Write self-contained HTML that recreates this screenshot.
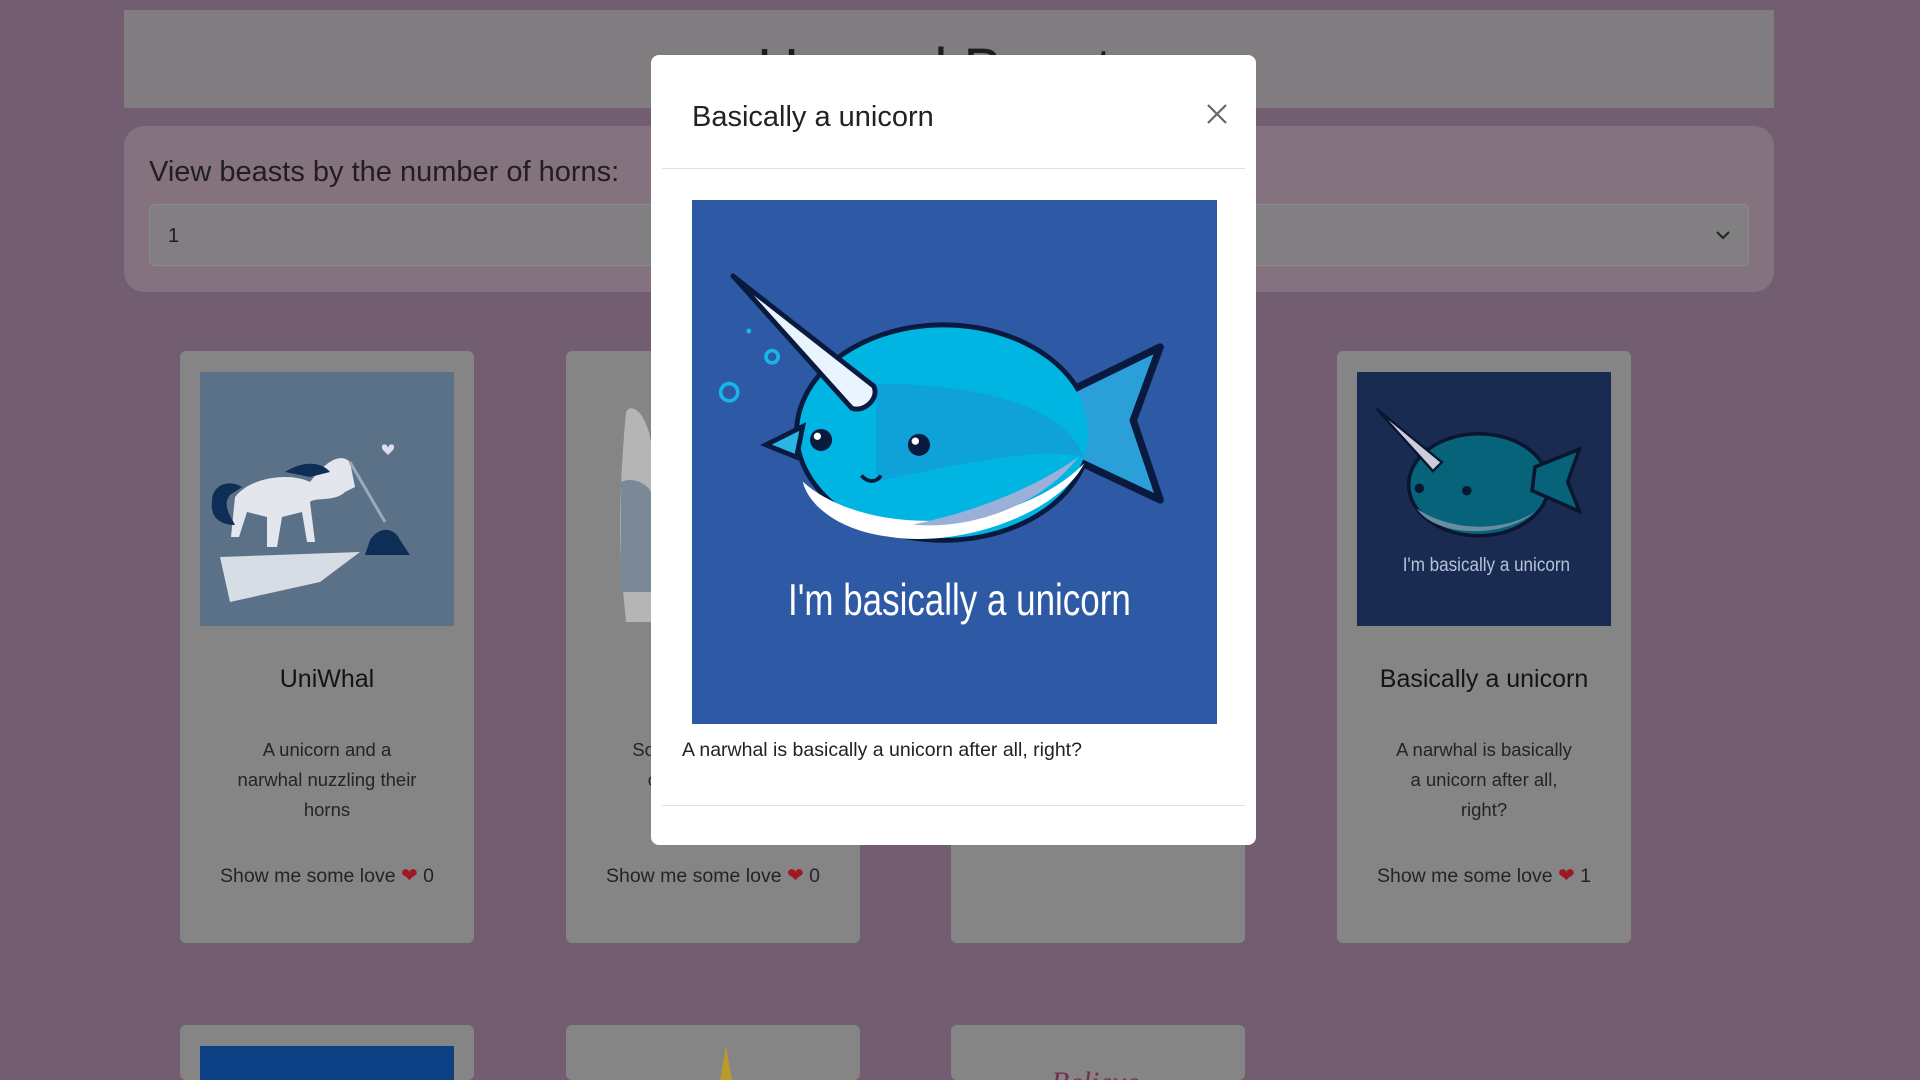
<!DOCTYPE html>
<html style="width:1920px;height:1080px;overflow:hidden"><head><meta charset="utf-8"><style>
*{box-sizing:border-box;margin:0;padding:0}
body{width:1920px;height:1080px;overflow:hidden;background:#735d71;font-family:"Liberation Sans",sans-serif;color:#1f1d1f;position:relative}
.hdr{position:absolute;left:124px;top:10px;width:1650px;height:98px;background:#807c80;overflow:hidden}
.hdr h1{position:absolute;left:0;right:0;top:26px;text-align:center;font-size:58px;font-weight:500;color:#1e1c1f}
.flt{position:absolute;left:124px;top:126px;width:1650px;height:166px;background:#85727f;border-radius:20px}
.flt label{position:absolute;left:25px;top:30px;font-size:29px;color:#221d21}
.sel{position:absolute;left:25px;top:78px;width:1600px;height:62px;background:#827f83;border:1px solid #8d8a8e;border-radius:6px;font-size:20px;padding:20px 0 0 18px}
.sel svg{position:absolute;right:16px;top:24px}
.card{position:absolute;width:294px;height:592px;background:#858585;border-radius:6px;text-align:center;overflow:hidden}
.card .im{position:absolute;left:20px;top:21px;width:254px;height:254px;overflow:hidden}
.card h3{position:absolute;left:0;right:0;top:314px;font-size:25px;font-weight:500;color:#151315}
.card p{position:absolute;left:20px;right:20px;top:384px;font-size:18.5px;line-height:30px;color:#262326}
.card .lv{position:absolute;left:0;right:0;top:512px;font-size:19.5px;color:#262326}
.heart{color:#a01822;font-size:20px}
.modal{position:absolute;left:651px;top:55px;width:605px;height:790px;background:#fff;border-radius:8px}
.modal h2{position:absolute;left:41px;top:46px;font-size:29px;font-weight:500;color:#222}
.modal .x{position:absolute;left:554px;top:47px}
.hr{position:absolute;left:11px;width:583px;height:1px;background:#dee2e6}
.modal .pic{position:absolute;left:41px;top:145px;width:525px;height:524px;background:#2e59a5}
.modal p{position:absolute;left:31px;top:684px;font-size:19.5px;color:#222}
</style></head><body>
<div class="hdr"><h1>Horned Beasts</h1></div>
<div class="flt"><label>View beasts by the number of horns:</label>
<div class="sel">1<svg width="18" height="12" viewBox="0 0 18 12"><path d="M3 3l6 6 6-6" stroke="#222" stroke-width="2" fill="none"/></svg></div></div>

<div class="card" style="left:180px;top:351px">
<div class="im" style="background:#5b7188"><svg width="254" height="254" viewBox="0 0 254 254">
<path d="M20 185l140-5-40 30-90 20z" fill="#d7dde4"/><path d="M35 125c15-20 55-25 75-15 15-20 30-30 40-20l5 25-10 5c-10 10-30 5-35 10l5 40h-8l-5-30-20 5-5 30h-10l0-30-20-5-8 25h-8z" fill="#e3e7ed"/><path d="M12 130c0-20 20-22 30-15l-12 8c-8 10 0 20 5 30-15 0-25-8-23-23z" fill="#0f2e57"/><path d="M85 100c15-10 35-12 45 0l-20 5z" fill="#0f2e57"/><path d="M150 90l35 60" stroke="#9ab" stroke-width="3"/><path d="M170 168c10-15 25-12 30 0l10 15h-45z" fill="#0f2e57"/><path d="M183 78c-4-6 4-8 5-2 1-6 9-4 5 2l-5 5z" fill="#dde"/>
</svg></div>
<h3>UniWhal</h3><p>A unicorn and a<br>narwhal nuzzling their<br>horns</p><div class="lv">Show me some love <span class="heart">❤</span> 0</div></div>

<div class="card" style="left:566px;top:351px">
<div class="im" style="background:#858585"><svg width="254" height="254"><path d="M40 40c5-10 20 0 25 30l0 180h-25c-5-50-10-100 0-210z" fill="#b5b5b5"/><path d="M35 110c10-5 25 0 30 10v100h-30z" fill="#7a8898"/></svg></div>
<h3>UniLego</h3><p>Someone created a<br>creative unicorn</p><div class="lv">Show me some love <span class="heart">❤</span> 0</div></div>

<div class="card" style="left:951px;top:351px"></div>

<div class="card" style="left:1337px;top:351px">
<div class="im" style="background:#1a2b52"><svg width="254" height="254" viewBox="0 0 428 428">
<ellipse cx="205" cy="190" rx="118" ry="86" fill="#06637a" stroke="#0a1530" stroke-width="6"/><path d="M300 160l75-30-20 55 20 50-80-35z" fill="#06637a" stroke="#0a1530" stroke-width="6"/>
<path d="M100 230c60 40 150 40 200 5-40 40-160 50-200-5z" fill="#6a8ca0"/>
<path d="M33 62l110 90-15 15z" fill="#ccd" stroke="#0a1530" stroke-width="4"/>
<circle cx="105" cy="196" r="8" fill="#0a1530"/><circle cx="185" cy="200" r="8" fill="#0a1530"/>
<text x="218" y="335" font-size="32" fill="#b5c2d6" text-anchor="middle" textLength="282" lengthAdjust="spacingAndGlyphs" font-family="Liberation Sans,sans-serif">I'm basically a unicorn</text></svg></div>
<h3>Basically a unicorn</h3><p>A narwhal is basically<br>a unicorn after all,<br>right?</p><div class="lv">Show me some love <span class="heart">❤</span> 1</div></div>

<div class="card" style="left:180px;top:1025px;height:55px"><div class="im" style="background:#0d3f84;height:34px"></div></div>
<div class="card" style="left:566px;top:1025px;height:55px"><div class="im" style="height:34px"><svg width="254" height="34"><path d="M140 0l-6 34h12z" fill="#b99a2a"/></svg></div></div>
<div class="card" style="left:951px;top:1025px;height:55px"><div class="im" style="height:34px"><svg width="254" height="34"><text x="80" y="46" font-size="30" fill="#7a2c52" font-family="Liberation Serif,serif" font-style="italic">Believe</text></svg></div></div>

<div class="modal">
<h2>Basically a unicorn</h2>
<svg class="x" width="24" height="24" viewBox="0 0 24 24"><path d="M3 3l18 18M21 3L3 21" stroke="#666" stroke-width="2.2"/></svg>
<div class="hr" style="top:113px"></div>
<div class="pic"><svg width="525" height="524" viewBox="0 0 428 428">
<ellipse cx="205" cy="190" rx="122" ry="90" fill="#0a1a3f"/>
<path d="M300 160l82-40-22 60 22 65-85-40z" fill="#2b9fd8" stroke="#0a1a3f" stroke-width="6" stroke-linejoin="round"/>
<ellipse cx="205" cy="190" rx="118" ry="86" fill="#00b5e2"/>
<path d="M90 230c50 45 170 45 230-15-20 40-100 70-160 60-40-5-65-25-70-45z" fill="#ffffff"/>
<path d="M180 265c50-10 100-30 135-55-30 40-90 60-135 55z" fill="#9bb0d8"/>
<path d="M150 150c60 0 150 10 170 60-40-10-120 10-170 20z" fill="#1c8fcf" opacity=".5"/>
<path d="M60 200l30-15-5 25z" fill="#2bb5e5" stroke="#0a1a3f" stroke-width="4"/>
<path d="M33 62l115 90c5 10-8 22-18 18z" fill="#eaf4ff" stroke="#0a1a3f" stroke-width="4" stroke-linejoin="round"/>
<circle cx="105" cy="196" r="9" fill="#0a1a3f"/><circle cx="102" cy="193" r="3" fill="#fff"/>
<circle cx="185" cy="200" r="9" fill="#0a1a3f"/><circle cx="182" cy="197" r="3" fill="#fff"/>
<path d="M138 225c5 6 12 6 16 0" stroke="#0a1a3f" stroke-width="3" fill="none"/>
<circle cx="30" cy="157" r="7" fill="none" stroke="#17b5e8" stroke-width="3"/>
<circle cx="65" cy="128" r="5" fill="none" stroke="#17b5e8" stroke-width="3"/>
<circle cx="46" cy="107" r="2" fill="#17b5e8"/>
<text x="218" y="339" font-size="36" fill="#fff" text-anchor="middle" textLength="280" lengthAdjust="spacingAndGlyphs" font-family="Liberation Sans,sans-serif">I'm basically a unicorn</text>
</svg></div>
<p>A narwhal is basically a unicorn after all, right?</p>
<div class="hr" style="top:750px"></div>
</div>
</body></html>
